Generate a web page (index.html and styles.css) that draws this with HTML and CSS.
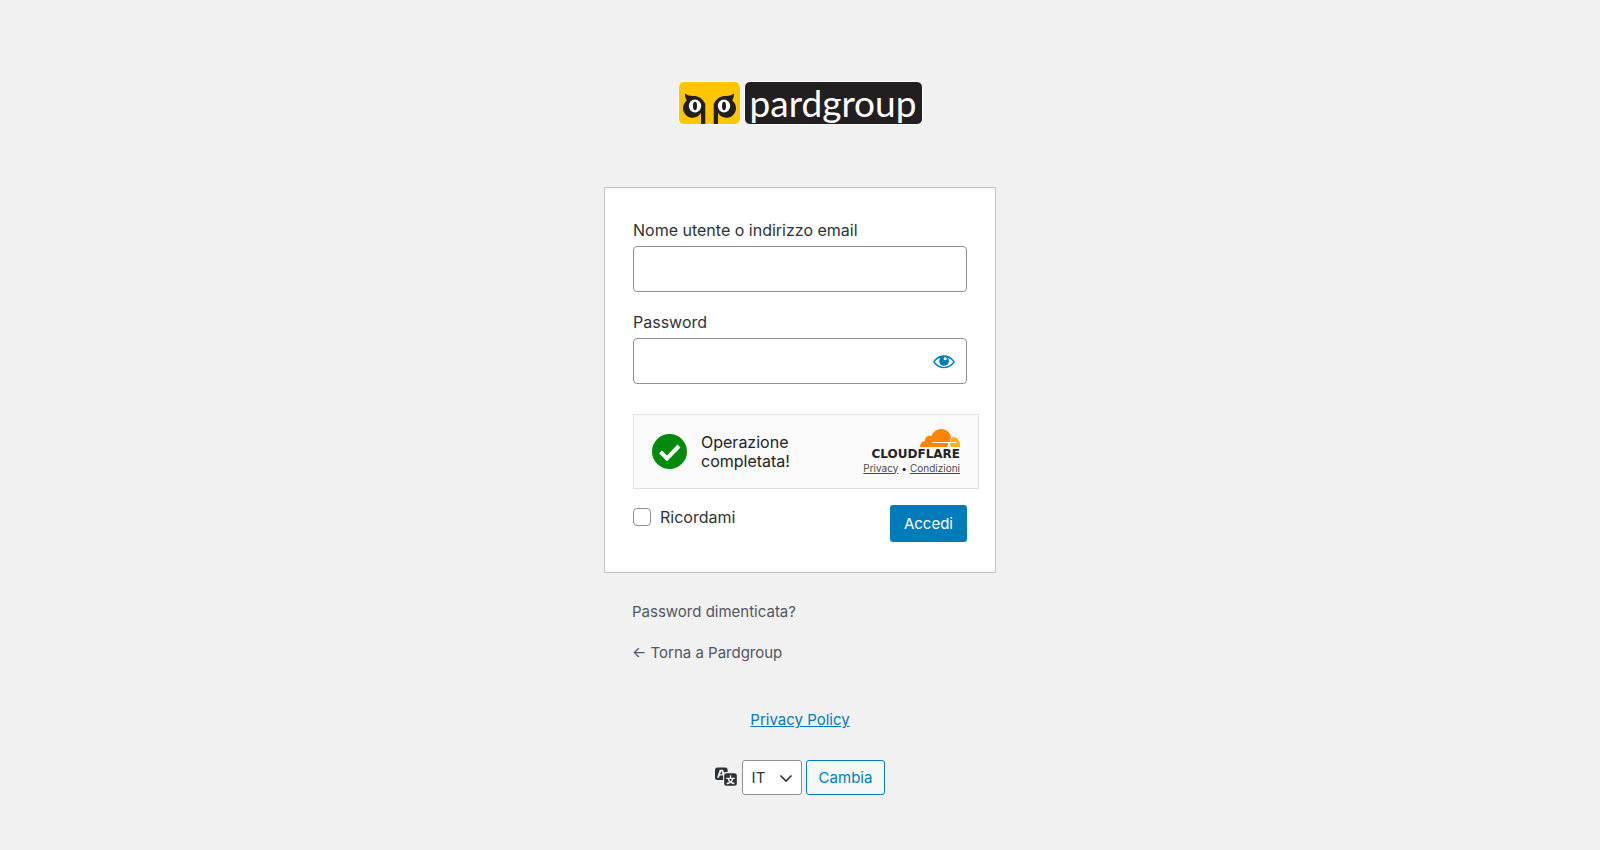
FILE: index.html
```html
<!DOCTYPE html>
<html lang="it">
<head>
  <meta charset="UTF-8">
  <meta name="viewport" content="width=device-width, initial-scale=1">
  <title>Accedi - Pardgroup</title>
  <link rel="stylesheet" href="styles.css">
</head>
<body>
  <main class="login">
    <h1 class="logo">
      <a href="#" class="logo-link">
        <!-- owl -->
        <svg class="logo-owl" viewBox="0 0 61 42" aria-hidden="true">
          <g id="eye">
            <path fill="#231f20" d="M6 11.500c2 1.800 5.500 2.600 8.500 2.500 5 0 9 2.300 11.800 8V42H22V30.800A9.600 9.600 0 1 1 7.800 18.500C6.500 16.800 5.800 14 6 11.500z"/>
            <ellipse cx="16" cy="24" rx="6.200" ry="6.500" fill="#fff"/>
            <ellipse cx="16" cy="24" rx="2" ry="4.200" fill="#231f20"/>
          </g>
          <use href="#eye" transform="matrix(-1 0 0 1 61 0)"/>
        </svg>
        <span class="logo-name">pardgroup</span>
      </a>
    </h1>

    <form class="login-form" onsubmit="return false">
      <label for="user_login">Nome utente o indirizzo email</label>
      <input type="text" id="user_login" class="input">

      <label for="user_pass">Password</label>
      <div class="password">
        <input type="password" id="user_pass" class="input">
        <button type="button" class="show-password" aria-label="Mostra password">
          <svg viewBox="0 0 20 20"><path fill="currentColor" d="M18.300 9.500C15 4.900 8.500 3.800 3.900 7.200c-1.200.9-2.200 2.100-3 3.400.2.4.5.8.8 1.200 3.300 4.600 9.600 5.600 14.200 2.400.9-.7 1.700-1.400 2.400-2.400.3-.4.5-.8.8-1.200-.3-.4-.5-.8-.8-1.100zm-8.200-2.300c.5-.5 1.300-.5 1.800 0s.5 1.300 0 1.800-1.300.5-1.800 0-.5-1.300 0-1.800zm-.1 7.700c-3.100 0-6-1.600-7.700-4.200C3.500 9 5.100 7.800 7 7.200c-.7.8-1 1.700-1 2.700 0 2.200 1.700 4.100 4 4.100 2.200 0 4.100-1.700 4.100-4v-.1c0-1-.4-2-1.100-2.700 1.900.6 3.500 1.800 4.700 3.500-1.700 2.600-4.600 4.200-7.700 4.200z"/></svg>
        </button>
      </div>

      <div class="turnstile">
        <svg class="success" viewBox="0 0 35 35" aria-hidden="true">
          <circle cx="17.500" cy="17.500" r="17.500" fill="#038a0c"/>
          <path d="M8.500 18l6.500 6.500L27 12" fill="none" stroke="#fff" stroke-width="4"/>
        </svg>
        <span class="success-text">Operazione completata!</span>
        <div class="branding">
          <svg class="cloud" viewBox="0 0 40 18" aria-hidden="true">
            <path fill="#fcb013" d="M32 8c4.500-.6 8 3 8 7.500V18h-9l-1-4h6.500v-1H30z"/>
            <path fill="#fb8500" d="M0 18c-.3-3 2-5.800 5-5.900C4.700 8.500 8 5.500 11.300 7.200 12.800 2.800 17 0 21.500 0 26.500 0 30.300 3.600 30.700 8.300c.2 1.800-.4 3.200-.9 4.700H12v1h16c.3 1.500-.4 3-1.200 4z"/>
          </svg>
          <span class="brand-name">CLOUDFLARE</span>
          <div class="terms"><a href="#">Privacy</a><span>•</span><a href="#">Condizioni</a></div>
        </div>
      </div>

      <div class="actions">
        <div class="remember">
          <input type="checkbox" id="rememberme">
          <label for="rememberme">Ricordami</label>
        </div>
        <button type="submit" class="button-primary">Accedi</button>
      </div>
    </form>

    <nav class="links">
      <a href="#">Password dimenticata?</a>
      <a href="#">← Torna a Pardgroup</a>
    </nav>

    <a href="#" class="privacy">Privacy Policy</a>

    <form class="language" onsubmit="return false">
      <label for="language" aria-label="Lingua">
        <svg viewBox="0 0 20 20"><path fill="currentColor" d="M11 7H9.490c-.63 0-1.250.3-1.590.7L7 5H4.130l-2.390 7h1.690l.74-2H7v4H2c-1.100 0-2-.9-2-2V5c0-1.100.9-2 2-2h7c1.100 0 2 .9 2 2v2zM6.510 9H4.490l1-2.930zM10 8h7c1.100 0 2 .9 2 2v7c0 1.100-.9 2-2 2h-7c-1.100 0-2-.9-2-2v-7c0-1.100.9-2 2-2zm7.250 5v-1.080h-3.170V9.750h-1.160v2.170H9.750V13h1.280c.11.85.56 1.850 1.280 2.620-.87.36-1.890.62-2.310.62-.01.02.22.97.2 1.460.84 0 2.210-.5 3.280-1.150 1.090.65 2.480 1.150 3.340 1.150-.02-.49.2-1.440.2-1.460-.43 0-1.490-.27-2.380-.63.7-.77 1.140-1.770 1.250-2.610h1.360zm-3.810 1.930c-.5-.46-.85-1.130-1.010-1.930h2.090c-.17.8-.51 1.470-1 1.930l-.04.03s-.03-.02-.04-.03z"/></svg>
      </label>
      <div class="select">
        <select id="language"><option>IT</option></select>
        <svg class="chevron" viewBox="0 0 14 14" aria-hidden="true"><path d="M1.500 4.500L7 10l5.500-5.500" fill="none" stroke="#2c3338" stroke-width="1.600"/></svg>
      </div>
      <button type="submit" class="button-secondary">Cambia</button>
    </form>
  </main>
</body>
</html>
```
FILE: styles.css
```css
* {
  box-sizing: border-box;
}
body {
  margin: 0;
  background: #f1f1f1;
  color: #2c3338;
  font-family: Inter, "Liberation Sans", sans-serif;
  font-size: 16px;
  line-height: 24px;
}
input, button, select {
  font: inherit;
  margin: 0;
}
svg {
  display: block;
}
.login {
  max-width: 392px;
  margin: 0 auto;
  padding: 81px 0 40px;
}

/* logo */
.logo {
  margin: 0 0 62px;
  display: flex;
  justify-content: center;
}
.logo-link {
  display: flex;
  gap: 3px;
  text-decoration: none;
}
.logo-owl {
  width: 63px;
  height: 44px;
  background: #ffc600;
  border: 1px solid #fff;
  border-radius: 6px;
}
.logo-name {
  width: 179px;
  height: 44px;
  overflow: hidden;
  text-align: center;
  background: #231f20;
  border: 1px solid #fff;
  border-radius: 6px;
  color: #fff;
  font: 37px/42px Lato, sans-serif;
}

/* form */
.login-form {
  background: #fff;
  border: 1px solid #c3c4c7;
  padding: 30px 28px;
}
.login-form label {
  display: block;
}
.input {
  display: block;
  width: 100%;
  height: 46px;
  margin: 4px 0 18px;
  padding: 4px 8px;
  background: #fff;
  border: 1px solid #8c8f94;
  border-radius: 4px;
}
.password {
  position: relative;
}
.show-password {
  position: absolute;
  top: 0;
  right: 0;
  width: 46px;
  height: 46px;
  padding: 0 11px;
  border: 0;
  background: none;
  color: #007cba;
}
.turnstile {
  display: flex;
  align-items: center;
  height: 75px;
  margin: 30px -12px 16px 0;
  padding: 0 18px;
  background: #fafafa;
  border: 1px solid #e0e0e0;
  color: #232323;
  line-height: 19px;
}
.success {
  flex: none;
  width: 35px;
  height: 35px;
  margin-right: 14px;
}
.success-text {
  width: 120px;
}
.branding {
  display: flex;
  flex-direction: column;
  align-items: flex-end;
  margin-left: auto;
}
.cloud {
  width: 40px;
  height: 18px;
}
.brand-name {
  font-family: "DejaVu Sans", sans-serif;
  font-size: 12px;
  font-weight: bold;
  line-height: 14px;
}
.terms {
  display: flex;
  gap: 3px;
  font-size: 10px;
  line-height: 14px;
}
.terms a {
  color: #4a4a4a;
}
.actions {
  display: flex;
  justify-content: space-between;
  align-items: flex-start;
}
.remember {
  display: flex;
  align-items: center;
  gap: 9px;
}
.remember input {
  appearance: none;
  width: 18px;
  height: 18px;
  border: 1px solid #8c8f94;
  border-radius: 4px;
  background: #fff;
}
.button-primary {
  height: 37px;
  padding: 0 14px;
  border: 0;
  border-radius: 3px;
  background: #007cba;
  color: #fff;
  font-size: 15px;
}

/* below the form */
.links {
  display: flex;
  flex-direction: column;
  align-items: flex-start;
  gap: 17px;
  padding: 27px 28px 0;
  font-size: 15px;
}
.links a {
  color: #50575e;
  text-decoration: none;
}
.privacy {
  display: block;
  width: fit-content;
  margin: 43px auto 28px;
  color: #007cba;
  font-size: 15px;
}
.language {
  display: flex;
  justify-content: center;
  align-items: center;
  gap: 4px;
  font-size: 15px;
}
.language label {
  padding-bottom: 4px;
}
.language label svg {
  width: 23px;
  height: 23px;
}
.select {
  position: relative;
}
.select select {
  appearance: none;
  display: block;
  width: 60px;
  height: 35px;
  padding: 0 24px 0 9px;
  border: 1px solid #8c8f94;
  border-radius: 3px;
  background: #fff;
  color: #2c3338;
}
.chevron {
  position: absolute;
  top: 11px;
  right: 9px;
  width: 14px;
  height: 14px;
  pointer-events: none;
}
.button-secondary {
  height: 35px;
  padding: 0 12px;
  border: 1px solid #007cba;
  border-radius: 3px;
  background: #f6f7f7;
  color: #007cba;
}
```
